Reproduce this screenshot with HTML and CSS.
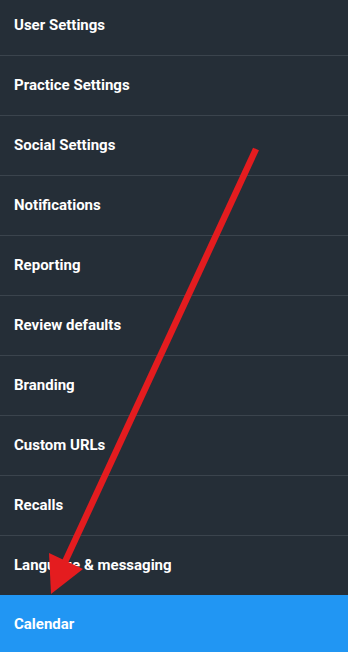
FILE: index.html
```html
<!DOCTYPE html>
<html>
<head>
  <title>Settings</title>
  <link rel="stylesheet" href="styles.css">
</head>
<body>
  <div class="panel">
    <ul class="menu">
      <li class="menu-item">User Settings</li>
      <li class="menu-item">Practice Settings</li>
      <li class="menu-item">Social Settings</li>
      <li class="menu-item">Notifications</li>
      <li class="menu-item">Reporting</li>
      <li class="menu-item">Review defaults</li>
      <li class="menu-item">Branding</li>
      <li class="menu-item">Custom URLs</li>
      <li class="menu-item">Recalls</li>
      <li class="menu-item">Language &amp; messaging</li>
      <li class="menu-item active">Calendar</li>
    </ul>
    <svg class="arrow" width="348" height="652" viewBox="0 0 348 652">
      <line x1="256" y1="149" x2="64" y2="564" stroke="#e41c1f" stroke-width="6.5"/>
      <polygon points="49,553 83,569 51,594" fill="#e41c1f"/>
    </svg>
  </div>
</body>
</html>
```
FILE: styles.css
```css
body { margin: 0; background: #252e37; font-family: Roboto, Arial, sans-serif; overflow: hidden; }
.panel { position: relative; width: 348px; height: 652px; overflow: hidden; }
.menu { list-style: none; margin: -4px 0 0 0; padding: 0; }
.menu-item { height: 59px; line-height: 58px; padding-left: 14px; color: #fff; font-size: 15px; font-weight: 700; border-bottom: 1px solid #3b444d; }
.menu-item.active { background: #2196f3; border-bottom: none; height: 60px; line-height: 58px; margin-top: -1px; }
.arrow { position: absolute; top: 0; left: 0; }
```
